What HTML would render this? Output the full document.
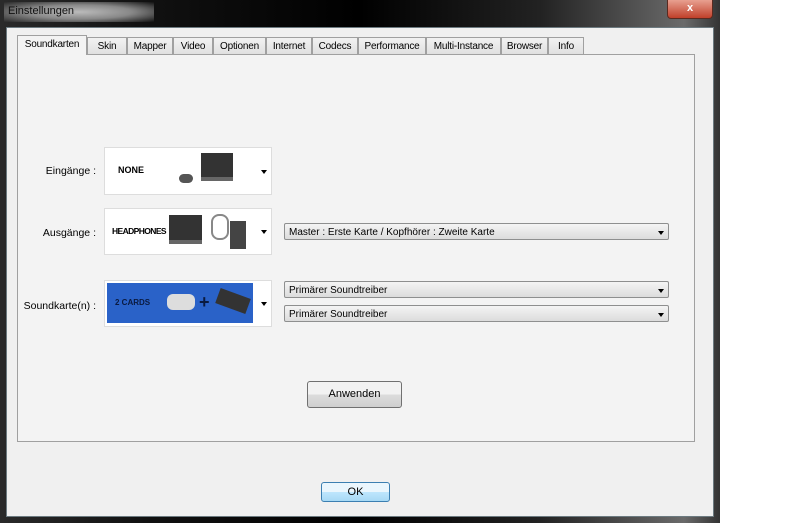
<!DOCTYPE html>
<html><head><style>
body{margin:0;width:800px;height:523px;background:#fff;position:relative;overflow:hidden;font-family:"Liberation Sans",sans-serif;font-size:11px;color:#000}
.a{position:absolute}
.frame{left:0;top:0;width:720px;height:523px;background:linear-gradient(90deg,#2a2a2a 0%,#111 20%,#000 50%,#222 75%,#6a6a6a 95%,#333 100%)}
.client{left:6px;top:27px;width:706px;height:488px;background:#f0f0f0;border:1px solid #6c7a80}
.panel{left:17px;top:54px;width:676px;height:386px;background:#f3f3f3;border:1px solid #a0a0a0}
.tab{position:absolute;top:37px;height:17px;border:1px solid #a0a0a0;border-bottom:none;background:linear-gradient(#f2f2f2,#e0e0e0);text-align:center;line-height:17px;font-size:10px;box-sizing:border-box;letter-spacing:-0.2px}
.lbl{font-size:10.5px;text-align:right;width:90px}
.img{background:#fff;border:1px solid #ddd}
.combo{left:284px;width:385px;height:17px;border:1px solid #8e8f8f;border-radius:2px;background:linear-gradient(#f4f4f4,#dcdcdc);line-height:17px;padding-left:4px;box-sizing:border-box;font-size:10px}
.arr{position:absolute;right:4px;top:7px;width:0;height:0;border-left:3px solid transparent;border-right:3px solid transparent;border-top:4px solid #000}
.btn{border:1px solid #707070;border-radius:3px;background:linear-gradient(#f2f2f2 50%,#dcdcdc 50%,#cfcfcf);text-align:center;font-size:11px;box-sizing:border-box}
</style></head><body>
<div class="a frame"></div>
<div class="a" style="left:4px;top:2px;width:150px;height:20px;background:radial-gradient(ellipse at center,#bbb 0%,#888 50%,rgba(80,80,80,0) 100%)"></div>
<div class="a" style="left:8px;top:5px;color:#111;font-size:11px">Einstellungen</div>
<div class="a" style="left:667px;top:0;width:44px;height:18px;background:linear-gradient(#e8a090,#c0402a);border:1px solid #5a2a20;border-top:none;border-radius:0 0 4px 4px;color:#fff;text-align:center;font-weight:bold;line-height:17px">x</div>
<div class="a client"></div>
<div class="a panel"></div>
<div class="tab" style="left:17px;width:70px;top:35px;height:20px;background:#f3f3f3;z-index:2">Soundkarten</div>
<div class="tab" style="left:87px;width:40px">Skin</div>
<div class="tab" style="left:127px;width:46px">Mapper</div>
<div class="tab" style="left:173px;width:40px">Video</div>
<div class="tab" style="left:213px;width:53px">Optionen</div>
<div class="tab" style="left:266px;width:46px">Internet</div>
<div class="tab" style="left:312px;width:46px">Codecs</div>
<div class="tab" style="left:358px;width:68px">Performance</div>
<div class="tab" style="left:426px;width:75px">Multi-Instance</div>
<div class="tab" style="left:501px;width:47px">Browser</div>
<div class="tab" style="left:548px;width:36px">Info</div>

<div class="a lbl" style="left:6px;top:165px">Eingänge :</div>
<div class="a img" style="left:104px;top:147px;width:166px;height:46px">
 <div class="a" style="left:13px;top:17px;font-weight:bold;font-size:9px">NONE</div>
 <div class="a" style="left:96px;top:5px;width:32px;height:24px;background:#333;border-bottom:4px solid #666"></div>
 <div class="a" style="left:74px;top:26px;width:14px;height:9px;background:#555;border-radius:6px"></div>
 <div class="arr" style="top:22px"></div>
</div>
<div class="a lbl" style="left:6px;top:227px">Ausgänge :</div>
<div class="a img" style="left:104px;top:208px;width:166px;height:45px">
 <div class="a" style="left:7px;top:17px;font-weight:bold;font-size:8.5px;letter-spacing:-0.6px">HEADPHONES</div>
 <div class="a" style="left:64px;top:6px;width:33px;height:25px;background:#333;border-bottom:4px solid #666"></div>
 <div class="a" style="left:106px;top:5px;width:14px;height:22px;border:2px solid #888;border-radius:8px"></div>
 <div class="a" style="left:125px;top:12px;width:16px;height:28px;background:#444"></div>
 <div class="arr" style="top:21px"></div>
</div>
<div class="a lbl" style="left:6px;top:300px">Soundkarte(n) :</div>
<div class="a img" style="left:104px;top:280px;width:166px;height:45px">
 <div class="a" style="left:2px;top:2px;width:146px;height:40px;background:#2a62c8"></div>
 <div class="a" style="left:10px;top:17px;font-weight:bold;font-size:8px;color:#0a1a40">2 CARDS</div>
 <div class="a" style="left:62px;top:13px;width:28px;height:16px;background:#ddd;border-radius:6px"></div>
 <div class="a" style="left:94px;top:13px;font-weight:bold;font-size:18px;color:#0a1a40;line-height:16px">+</div>
 <div class="a" style="left:112px;top:12px;width:32px;height:16px;background:#333;transform:rotate(20deg)"></div>
 <div class="arr" style="top:21px"></div>
</div>
<div class="a combo" style="top:223px">Master : Erste Karte / Kopfhörer : Zweite Karte<div class="arr"></div></div>
<div class="a combo" style="top:281px">Primärer Soundtreiber<div class="arr"></div></div>
<div class="a combo" style="top:305px">Primärer Soundtreiber<div class="arr"></div></div>
<div class="a btn" style="left:307px;top:381px;width:95px;height:27px;line-height:25px">Anwenden</div>
<div class="a btn" style="left:321px;top:482px;width:69px;height:20px;line-height:18px;border-color:#3c7fb1;background:linear-gradient(#eaf6fd 50%,#bee6fd 50%,#a7d9f5)">OK</div>
</body></html>
